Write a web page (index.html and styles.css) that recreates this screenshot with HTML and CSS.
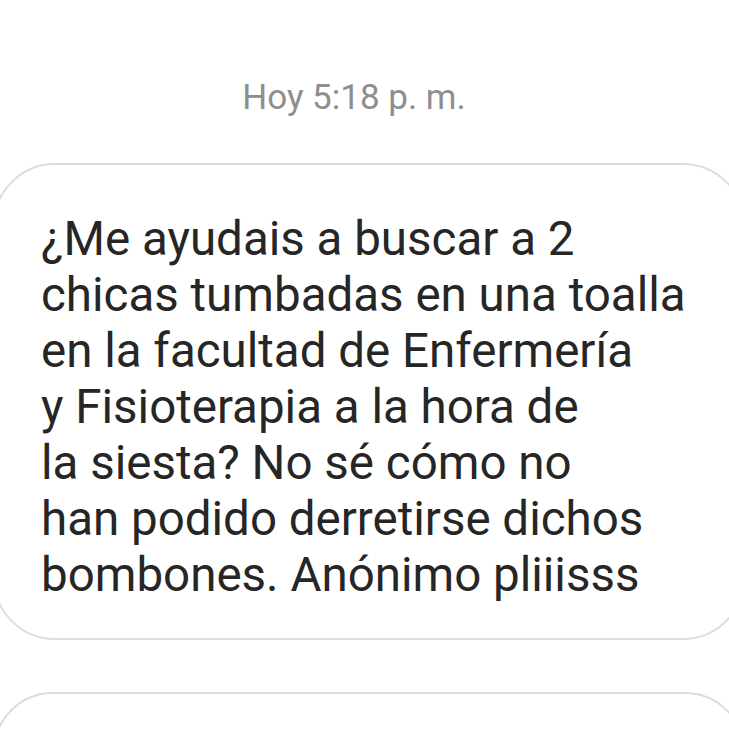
FILE: index.html
```html
<!DOCTYPE html>
<html lang="es">
<head>
<meta charset="utf-8">
<link rel="stylesheet" href="styles.css">
</head>
<body>
<div class="thread">
  <div class="stamp">Hoy 5:18 p. m.</div>
  <div class="bubble">
    <p class="msg">¿Me ayudais a buscar a 2<br>chicas tumbadas en una toalla<br>en la facultad de Enfermería<br>y Fisioterapia a la hora de<br>la siesta? No sé cómo no<br>han podido derretirse dichos<br>bombones. Anónimo pliiisss</p>
  </div>
  <div class="bubble next"></div>
</div>
</body>
</html>
```
FILE: styles.css
```css
html, body {
  margin: 0;
  padding: 0;
  background: #ffffff;
  overflow: hidden;
}
.thread {
  width: 729px;
  height: 729px;
  overflow: hidden;
  font-family: Roboto, "Noto Sans", sans-serif;
}
.stamp {
  padding-top: 78px;
  padding-right: 21px;
  text-align: center;
  font-size: 35px;
  line-height: 40px;
  color: #8e8e8e;
}
.bubble {
  margin-top: 45px;
  margin-left: -7px;
  width: 752px;
  box-sizing: border-box;
  border: 2px solid #dcdcdc;
  border-radius: 62px;
  padding: 46px 0 35px 46px;
}
.msg {
  margin: 0;
  font-size: 47.5px;
  line-height: 56px;
  color: #262626;
}
.bubble.next {
  margin-top: 52px;
  height: 120px;
  padding: 0;
}
```
